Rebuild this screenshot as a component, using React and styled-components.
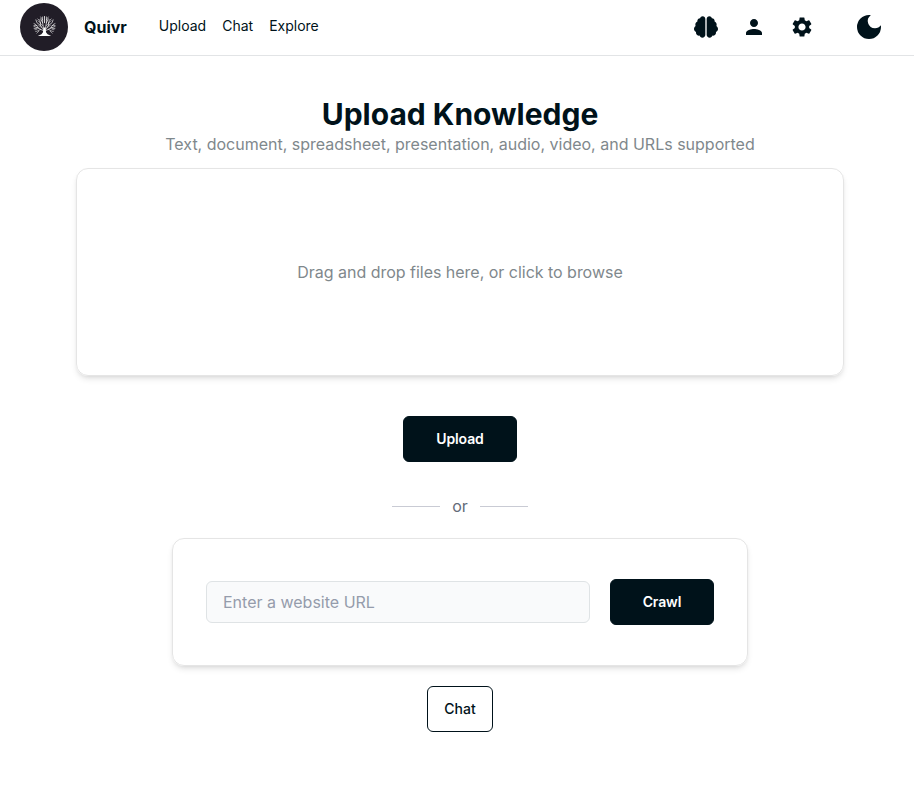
import React from "react";
import styled, { createGlobalStyle } from "styled-components";
import { FaBrain } from "react-icons/fa";
import { MdPerson, MdSettings, MdDarkMode } from "react-icons/md";

const Global = createGlobalStyle`
  *, *::before, *::after { box-sizing: border-box; }
  body { margin: 0; background: #fff; color: #00121a; font-family: Inter, sans-serif; font-size: 16px; line-height: 24px; }
  button, input { font: inherit; color: inherit; }
`;

const Header = styled.header`
  display: flex;
  align-items: center;
  height: 56px;
  padding: 0 29px 2px 20px;
  border-bottom: 1px solid #e2e4e6;
`;
const Logo = styled.div`
  width: 48px;
  height: 48px;
  border-radius: 50%;
  background: #211d27;
  display: grid;
  place-items: center;
`;
const Brand = styled.h1`
  margin: 0 32px 0 16px;
  font-size: 16px;
  font-weight: 700;
`;
const Nav = styled.nav`
  display: flex;
  gap: 16px;
  font-size: 14px;
  line-height: 20px;
  padding-bottom: 2px;
  flex: 1;
`;
const Actions = styled.div`
  display: flex;
  align-items: center;
  gap: 24px;
  svg { width: 24px; height: 24px; display: block; }
`;
const Theme = styled.div`
  margin-left: 15px;
  && svg { width: 32px; height: 32px; }
`;
const Main = styled.main`
  width: 768px;
  margin: 40px 0 0 76px;
  display: flex;
  flex-direction: column;
  align-items: center;
`;
const Title = styled.h2`
  margin: 0;
  font-size: 30px;
  line-height: 36px;
  font-weight: 700;
`;
const Subtitle = styled.p`
  margin: 0 0 12px;
  color: #7f888c;
`;
const Card = styled.section`
  width: ${(p) => p.$width}px;
  height: ${(p) => p.$height}px;
  display: flex;
  align-items: center;
  justify-content: center;
  gap: 20px;
  border: 1px solid #e5e5e5;
  border-radius: 12px;
  box-shadow: 0 4px 6px -1px rgba(0,0,0,.1), 0 2px 4px -2px rgba(0,0,0,.1);
`;
const DropHint = styled.p`
  margin: 0;
  color: #7f888c;
  letter-spacing: -0.02px;
`;
const Button = styled.button`
  width: ${(p) => p.$width}px;
  height: 46px;
  padding: 0;
  border: 1px solid #00121a;
  border-radius: 6px;
  background: ${(p) => (p.$outline ? "#fff" : "#00121a")};
  color: ${(p) => (p.$outline ? "#00121a" : "#fff")};
  font-size: 14px;
  font-weight: ${(p) => (p.$outline ? 500 : 600)};
  letter-spacing: ${(p) => (p.$outline ? 0 : "-0.1px")};
  margin: ${(p) => p.$margin || 0};
`;
const Divider = styled.div`
  display: flex;
  align-items: center;
  gap: 12px;
  margin-bottom: 20px;
  color: #646b79;
  &::before, &::after { content: ""; width: 48px; height: 1px; background: #c9cbd4; }
`;
const UrlInput = styled.input`
  width: 384px;
  height: 42px;
  padding: 0 16px;
  border: 1px solid #dfe3e5;
  border-radius: 6px;
  background: #f9fafb;
  &::placeholder { color: #959cab; opacity: 1; }
`;

/* Branches are mirrored around the trunk; twigs fill out a round crown. */
function Tree() {
  const branches =
    "M12 17 8 11 7 5M8 11 4 8 3 5M11 14 10 8 10 2M10 8 8 4M12 17 6 14 1 12M6 14 3 10 1 9";
  const twigs =
    "M5 13 2 15M8 15 4 17 2 17M6 17 4 19M8 8 5 6M4 11 1 11M10 5 8 2M6 5 5 4M12 8 12 1M9 13 6 11M4 15 1 14M10 11 7 8";
  return (
    <svg width="23" height="21" viewBox="0 1 24 22" fill="none" stroke="#fff" strokeLinecap="round">
      <path d={branches} strokeWidth=".8" opacity=".85" />
      <path d={branches} strokeWidth=".8" opacity=".85" transform="translate(24 0) scale(-1 1)" />
      <path d={twigs} strokeWidth=".9" opacity=".65" strokeDasharray="1.4 .8" />
      <path d={twigs} strokeWidth=".9" opacity=".65" strokeDasharray="1.4 .8" transform="translate(24 0) scale(-1 1)" />
      <path d="M11 13 10.4 18 8.8 20 5 22 19 22 15.2 20 13.6 18 13 13Z" fill="#fff" stroke="none" />
    </svg>
  );
}

export default function App() {
  return (
    <>
      <Global />
      <Header>
        <Logo><Tree /></Logo>
        <Brand>Quivr</Brand>
        <Nav><span>Upload</span><span>Chat</span><span>Explore</span></Nav>
        <Actions>
          <FaBrain />
          <MdPerson />
          <MdSettings />
          <Theme><MdDarkMode /></Theme>
        </Actions>
      </Header>
      <Main>
        <Title>Upload Knowledge</Title>
        <Subtitle>Text, document, spreadsheet, presentation, audio, video, and URLs supported</Subtitle>
        <Card $width={768} $height={208}>
          <DropHint>Drag and drop files here, or click to browse</DropHint>
        </Card>
        <Button $width={114} $margin="40px 0 32px">Upload</Button>
        <Divider>or</Divider>
        <Card $width={576} $height={128}>
          <UrlInput placeholder="Enter a website URL" />
          <Button $width={104}>Crawl</Button>
        </Card>
        <Button $width={66} $outline $margin="20px 0 0">Chat</Button>
      </Main>
    </>
  );
}
